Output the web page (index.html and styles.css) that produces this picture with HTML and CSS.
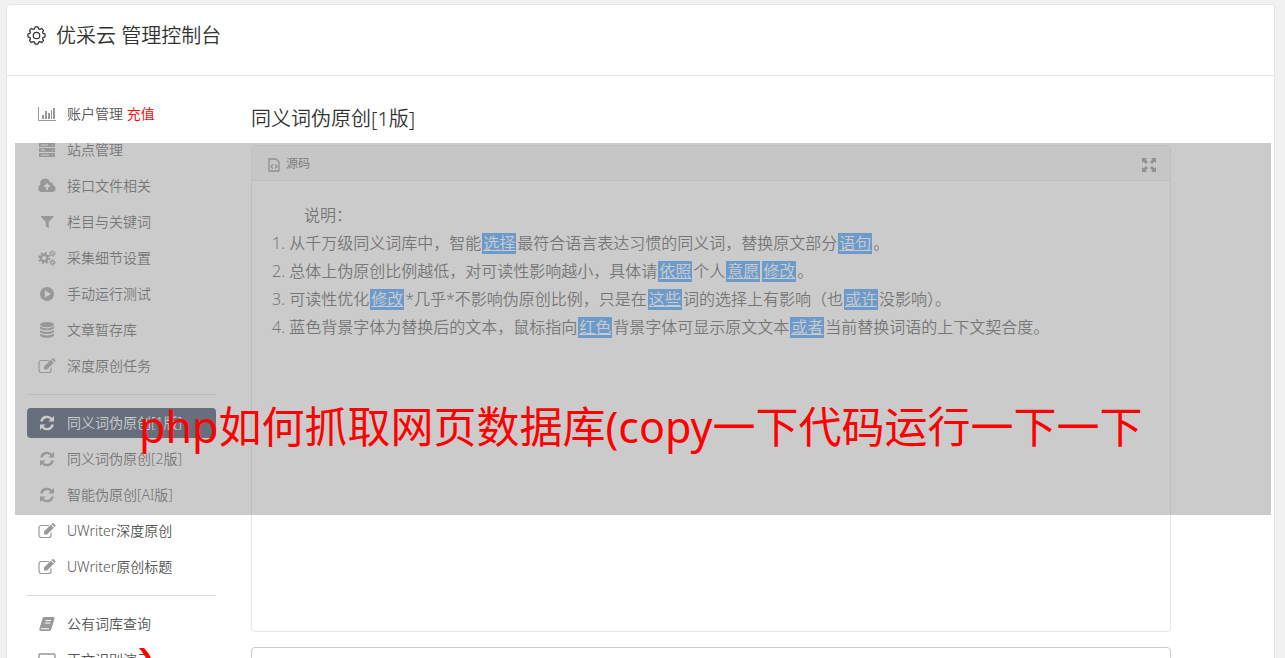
FILE: index.html
```
<!DOCTYPE html>
<html lang="zh-CN">

<head>
    <meta charset="UTF-8">
    <meta name="viewport" content="width=device-width, initial-scale=1.0">
    <title>优采云 管理控制台</title>
    <link rel="stylesheet" href="styles.css">
</head>

<body>
    <!-- shared icons -->
    <svg class="symbols" aria-hidden="true">
        <symbol id="i-edit" viewBox="0 0 18 16">
            <path d="M13 9.500v2.700a2.300 2.300 0 0 1-2.300 2.300H3.300A2.300 2.300 0 0 1 1 12.200V4.800A2.300 2.300 0 0 1 3.300 2.500H11" fill="none" stroke="currentColor" stroke-width="1.200" />
            <path d="M6 8.500L12.800 1.700l3 3L9 11.500H6z M13.500 1l.8-.8a.8.8 0 0 1 1.100 0l1.900 1.900a.8.8 0 0 1 0 1.100l-.8.8z" fill="currentColor" />
        </symbol>
        <symbol id="i-sync" viewBox="0 0 16 16">
            <path d="M2.300 6.500A5.900 5.900 0 0 1 12.600 4M13.700 9.500A5.900 5.900 0 0 1 3.400 12" fill="none" stroke="currentColor" stroke-width="2.400" />
            <path d="M15 1v5.600H9.400zM1 15V9.400h5.600z" fill="currentColor" />
        </symbol>
    </svg>

    <div class="panel">
        <header class="panel-header">
            <svg class="gear" viewBox="0 0 20 20" fill="none" stroke="currentColor" stroke-width="1.300">
                <path d="M7.700 3.200L8.500 1h3l.8 2.200l1 .4L15.400 2.600L17.400 4.600L16.400 6.700l.4 1L19 8.500v3l-2.200.8l-.4 1L17.400 15.400L15.400 17.400L13.300 16.400l-1 .4L11.500 19h-3l-.8-2.200l-1-.4L4.600 17.400L2.600 15.400L3.600 13.300l-.4-1L1 11.500v-3l2.200-.8l.4-1L2.600 4.600L4.600 2.600L6.700 3.600z" stroke-linejoin="round" />
                <circle cx="10" cy="10" r="3.400" />
            </svg>
            <h1>优采云 管理控制台</h1>
        </header>

        <div class="container">
            <nav class="sidebar">
                <a href="#"><svg viewBox="0 0 18 16"><path d="M.5 1v13.500H18" fill="none" stroke="currentColor" /><path d="M4 9h2v4H4zM7 5h2v8H7zM10 7h2v6h-2zM13 4h1v9h-1zM15 2h2v11h-2z" fill="currentColor" /></svg>账户管理 <em>充值</em></a>
                <a href="#"><svg viewBox="0 0 18 16"><path d="M1 1h16v4H1zM1 6h16v4H1zM1 11h16v4H1z" fill="currentColor" /><path d="M3 3h7M3 8h4M3 13h8M14 3h1M14 8h1M14 13h1" stroke="#fff" /></svg>站点管理</a>
                <a href="#"><svg viewBox="0 0 18 16"><path d="M4.500 14A4 4 0 0 1 2.300 6.500A5 5 0 0 1 12 4.200A3 3 0 0 1 15 7.300A3.400 3.400 0 0 1 14.300 14z" fill="currentColor" /><path d="M9 12V8M6.500 9L9 6.300L11.500 9" fill="none" stroke="#fff" stroke-width="1.800" /></svg>接口文件相关</a>
                <a href="#"><svg viewBox="0 0 18 16"><path d="M3 2h12.500v1L10.700 8v6.500L7.800 12V8L3 3z" fill="currentColor" /></svg>栏目与关键词</a>
                <a href="#"><svg viewBox="0 0 18 16" fill="none" stroke="currentColor"><circle cx="6.200" cy="8" r="3.300" stroke-width="2.400" /><circle cx="6.200" cy="8" r="5.200" stroke-width="1.800" stroke-dasharray="2 2.080" /><circle cx="14.500" cy="3.500" r="1.700" stroke-width="1.300" /><circle cx="14.500" cy="3.500" r="2.800" stroke-dasharray="1.400 1.530" /><circle cx="14.500" cy="12.500" r="1.700" stroke-width="1.300" /><circle cx="14.500" cy="12.500" r="2.800" stroke-dasharray="1.400 1.530" /></svg>采集细节设置</a>
                <a href="#"><svg viewBox="0 0 18 16"><path fill-rule="evenodd" d="M9 1a7 7 0 1 0 .01 0zM6.800 4.200v7.600L13 8z" fill="currentColor" /></svg>手动运行测试</a>
                <a href="#"><svg viewBox="0 0 18 16" fill="currentColor"><ellipse cx="9" cy="2.700" rx="7" ry="2.600" /><path d="M2 4.600q7 3.600 14 0v1.700q-1.500 2-7 2t-7-2zM2 8.200q7 3.600 14 0v1.700q-1.500 2-7 2t-7-2zM2 11.800q7 3.600 14 0v1.700q-1.500 2.300-7 2.300t-7-2.300z" /></svg>文章暂存库</a>
                <a href="#"><svg><use href="#i-edit" /></svg>深度原创任务</a>
                <hr>
                <a href="#" class="active"><svg><use href="#i-sync" /></svg>同义词伪原创[1版]</a>
                <a href="#"><svg><use href="#i-sync" /></svg>同义词伪原创[2版]</a>
                <a href="#"><svg><use href="#i-sync" /></svg>智能伪原创[AI版]</a>
                <a href="#"><svg><use href="#i-edit" /></svg>UWriter深度原创</a>
                <a href="#"><svg><use href="#i-edit" /></svg>UWriter原创标题</a>
                <hr>
                <a href="#"><svg viewBox="0 0 18 16"><path d="M6 1h9.500q1.500.2 1 1.700L13.400 13q-.5 2-2.400 2H3.200Q.8 15 1.500 12.500L4.500 2.500Q5 1 6 1z" fill="currentColor" /><path d="M7.500 4.500h5.500M6.800 7h5.500M3 12.800h8" fill="none" stroke="#fff" /></svg>公有词库查询</a>
                <a href="#"><svg viewBox="0 0 18 16"><path d="M2 2h14q1 0 1 1v8q0 1-1 1H2q-1 0-1-1V3q0-1 1-1zM5 15h8" fill="none" stroke="currentColor" stroke-width="1.400" /></svg>正文识别演示</a>
            </nav>

            <main class="content">
                <h2>同义词伪原创[1版]</h2>
                <section class="editor">
                    <div class="toolbar">
                        <button type="button"><svg viewBox="0 0 12 14" fill="none" stroke="currentColor" stroke-width="1.300"><path d="M1 1h7l3 3v9H1zM5 6.500L3 8.500l2 2M7 6.500l2 2l-2 2" /></svg>源码</button>
                        <button type="button" aria-label="全屏"><svg class="expand" viewBox="0 0 14 14"><path d="M0 0h5L3.500 1.500L6 4L4 6L1.500 3.500L0 5zM14 0v5l-1.500-1.500L10 6L8 4l2.500-2.500L9 0zM0 14V9l1.500 1.500L4 8l2 2l-2.500 2.500L5 14zM14 14H9l1.500-1.500L8 10l2-2l2.500 2.500L14 9z" fill="currentColor" /></svg></button>
                    </div>
                    <div class="text">
                        <p class="intro">说明：</p>
                        <p>1. 从千万级同义词库中，智能<mark>选择</mark>最符合语言表达习惯的同义词，替换原文部分<mark>语句</mark>。</p>
                        <p>2. 总体上伪原创比例越低，对可读性影响越小，具体请<mark>依照</mark>个人<mark>意愿</mark><mark>修改</mark>。</p>
                        <p>3. 可读性优化<mark>修改</mark>*几乎*不影响伪原创比例，只是在<mark>这些</mark>词的选择上有影响（也<mark>或许</mark>没影响）。</p>
                        <p>4. 蓝色背景字体为替换后的文本，鼠标指向<mark>红色</mark>背景字体可显示原文文本<mark>或者</mark>当前替换词语的上下文契合度。</p>
                    </div>
                </section>
                <section class="result"></section>
            </main>
        </div>
    </div>

    <div class="banner">php如何抓取网页数据库(copy一下代码运行一下一下</div>
    <svg class="banner-tail" viewBox="0 0 14 10"><path d="M1 0h5q4 4 7 10H8Q5 5 1 0z" fill="#f00" /></svg>
</body>

</html>
```
FILE: styles.css
```
* {
    margin: 0;
    padding: 0;
    box-sizing: border-box;
}

body {
    height: 100vh;
    overflow: hidden;
    position: relative;
    background-color: #f1f1f1;
    padding: 4px 10px 0 6px;
    font-family: "Noto Sans", "Noto Sans CJK SC", sans-serif;
    font-weight: 350;
    color: #333;
}

.symbols {
    display: none;
}

.panel {
    background-color: #fff;
    border: 1px solid #e5e5e5;
    border-radius: 4px;
}

.panel-header {
    display: flex;
    align-items: center;
    gap: 10px;
    height: 71px;
    padding: 0 20px 9px;
    border-bottom: 1px solid #e5e5e5;
}

.gear {
    width: 19px;
    height: 19px;
}

h1,
h2 {
    font-size: 20px;
    line-height: 28px;
    font-weight: 350;
}

.container {
    display: flex;
    gap: 35px;
    padding: 23px 20px;
}

.sidebar {
    flex: none;
    width: 189px;
}

.sidebar a {
    display: flex;
    align-items: center;
    height: 30px;
    margin-bottom: 6px;
    padding: 0 0 2px 11px;
    border-radius: 4px;
    font-size: 14px;
    white-space: pre;
    color: #555;
    text-decoration: none;
}

.sidebar svg {
    width: 18px;
    height: 16px;
    margin: 2px 11px 0 0;
    color: #999;
}

.sidebar em {
    font-style: normal;
    color: #f00;
}

.sidebar .active {
    background-color: #364663;
    color: #fff;
}

.sidebar .active svg {
    color: #fff;
}

.sidebar hr {
    border: none;
    border-top: 1px solid #ddd;
    margin: 13px 0;
}

.content {
    flex: 1;
    max-width: 920px;
    padding-top: 6px;
}

.editor {
    height: 487px;
    margin: 12px 0 15px;
    border: 1px solid #e5e5e5;
    border-radius: 4px;
}

.toolbar {
    display: flex;
    justify-content: space-between;
    align-items: center;
    height: 35px;
    padding: 0 14px 0 16px;
    background-color: #f5f5f5;
    border-bottom: 1px solid #e5e5e5;
}

.toolbar button {
    display: flex;
    align-items: center;
    gap: 6px;
    border: none;
    background: none;
    font: inherit;
    font-size: 12px;
    color: #555;
}

.toolbar svg {
    width: 12px;
    height: 14px;
    margin-top: 3px;
    color: #888;
}

.toolbar .expand {
    width: 14px;
}

.text {
    padding: 20px;
    font-size: 16px;
    line-height: 28px;
    color: #555;
}

.intro {
    text-indent: 2em;
}

mark {
    display: inline-block;
    height: 21px;
    line-height: 21px;
    padding: 0 1px;
    margin: 0 1px;
    background-color: #409eff;
    color: #fff;
    text-decoration: underline;
}

.result {
    height: 200px;
    border: 1px solid #ccc;
    border-radius: 4px;
}

/* translucent strip over the whole page */
.banner {
    position: absolute;
    top: 143px;
    left: 15px;
    right: 14px;
    height: 372px;
    padding-left: 124px;
    background-color: rgba(151, 151, 151, 0.5);
    color: #f00;
    font-size: 43px;
    font-weight: 400;
    line-height: 568px;
    white-space: nowrap;
}

.banner-tail {
    position: absolute;
    left: 138px;
    bottom: 0;
    width: 14px;
    height: 10px;
}
```
